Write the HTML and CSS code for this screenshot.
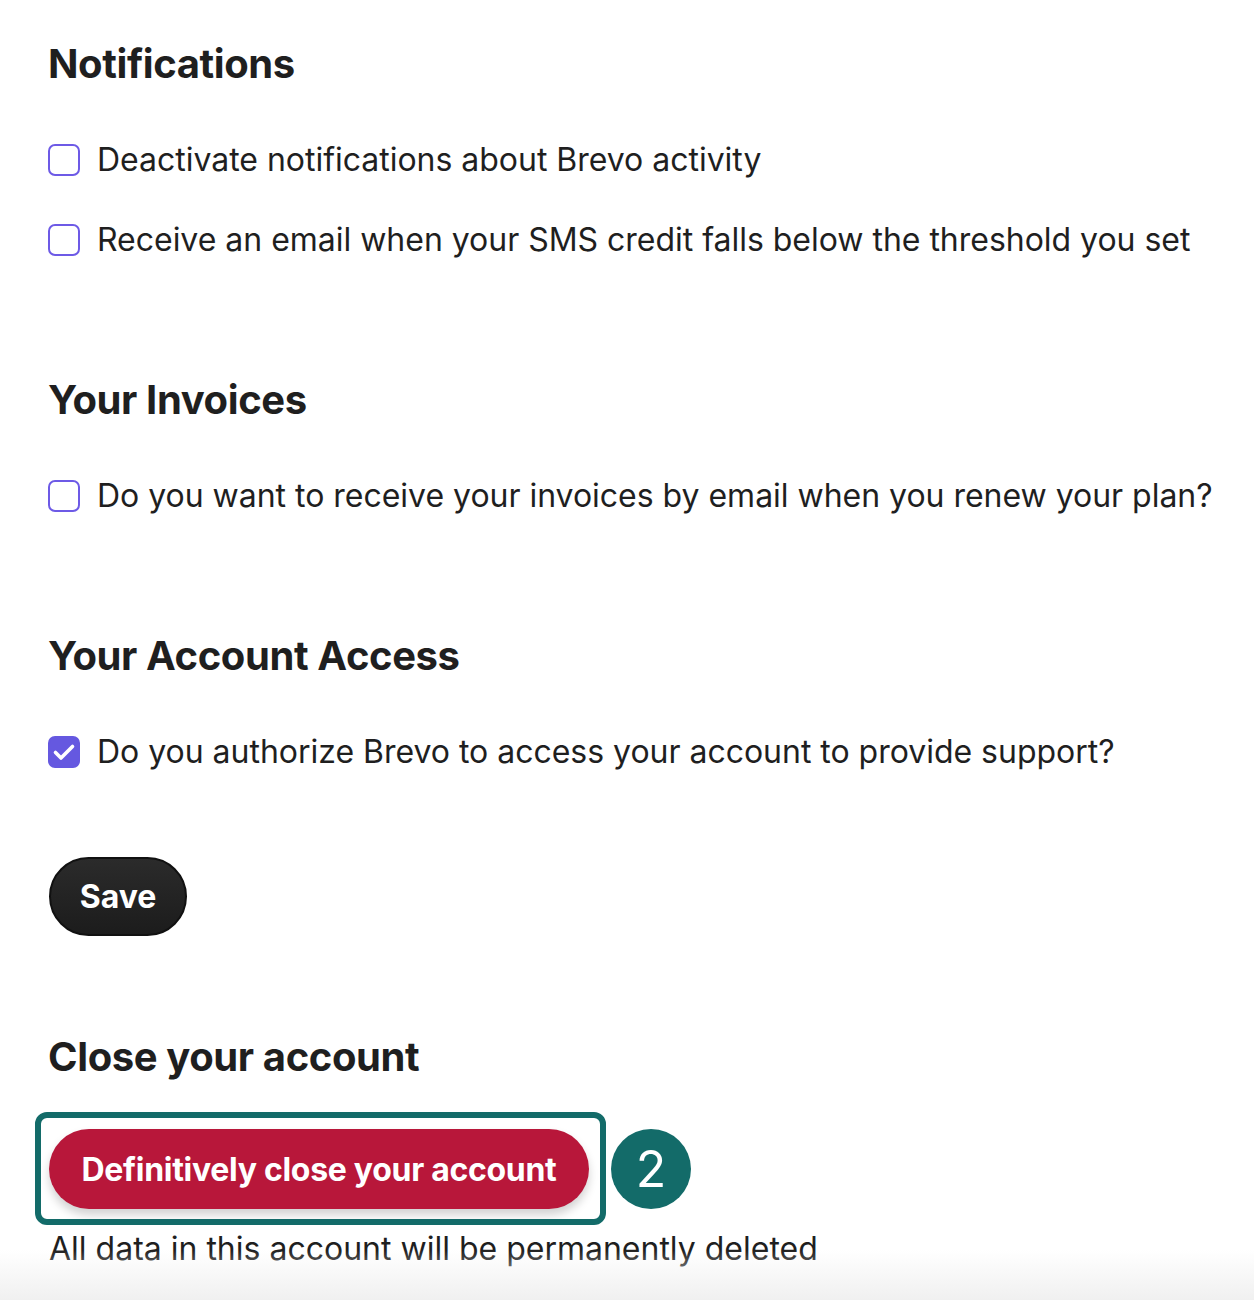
FILE: index.html
```html
<!DOCTYPE html>
<html lang="en">
<head>
<meta charset="utf-8">
<title>Account settings</title>
<link rel="stylesheet" href="styles.css">
</head>
<body>
<main class="page">
  <section class="section">
    <h2 class="section-title">Notifications</h2>
    <label class="check-row">
      <span class="box"></span>
      <span class="check-label">Deactivate notifications about Brevo activity</span>
    </label>
    <label class="check-row">
      <span class="box"></span>
      <span class="check-label">Receive an email when your SMS credit falls below the threshold you set</span>
    </label>
  </section>

  <section class="section">
    <h2 class="section-title">Your Invoices</h2>
    <label class="check-row">
      <span class="box"></span>
      <span class="check-label">Do you want to receive your invoices by email when you renew your plan?</span>
    </label>
  </section>

  <section class="section">
    <h2 class="section-title">Your Account Access</h2>
    <label class="check-row">
      <span class="box box-checked">
        <svg viewBox="0 0 32 32" aria-hidden="true"><path d="M7.5 16.5l5.5 5.5L24.5 10.5" fill="none" stroke="#fff" stroke-width="3.6" stroke-linecap="round" stroke-linejoin="round"/></svg>
      </span>
      <span class="check-label">Do you authorize Brevo to access your account to provide support?</span>
    </label>
  </section>

  <button class="btn-save" type="button">Save</button>

  <section class="close-section">
    <h2 class="section-title">Close your account</h2>
    <div class="close-row">
      <div class="highlight">
        <button class="btn-danger" type="button"><span class="btn-danger-text">Definitively close your account</span></button>
      </div>
      <span class="step-badge">2</span>
    </div>
    <p class="close-note">All data in this account will be permanently deleted</p>
  </section>
</main>
<div class="fade"></div>
</body>
</html>
```

FILE: styles.css
```css
html, body {
  margin: 0;
  padding: 0;
  background: #ffffff;
}

body {
  font-family: "Inter", "Noto Sans", sans-serif;
  color: #1f1f1f;
  height: 1300px;
  overflow: hidden;
  position: relative;
}

.page {
  padding: 40px 48px 0 48px;
}

.section {
  display: flex;
  flex-direction: column;
  gap: 32px;
  margin-bottom: 112px;
}

.section:nth-of-type(3) {
  margin-bottom: 81px;
}

.section-title {
  margin: 0 0 16px;
  font-size: 40px;
  line-height: 48px;
  font-weight: 700;
  letter-spacing: -0.4px;
}

.check-row {
  display: flex;
  align-items: center;
  gap: 17px;
  height: 48px;
  font-size: 32px;
  line-height: 48px;
  letter-spacing: -0.02px;
}

.box {
  flex: none;
  box-sizing: border-box;
  width: 32px;
  height: 32px;
  border: 2px solid #6d5ae6;
  border-radius: 7px;
  background: #fff;
  display: flex;
  align-items: center;
  justify-content: center;
}

.box-checked {
  background: #6558e0;
  border-color: #6558e0;
}

.box-checked svg {
  width: 32px;
  height: 32px;
  flex: none;
}

.check-label {
  white-space: nowrap;
}

.btn-save {
  display: block;
  box-sizing: border-box;
  height: 79px;
  width: 138px;
  padding: 0;
  border: 2px solid #111;
  border-radius: 40px;
  background: linear-gradient(#2b2b2b, #1c1c1c);
  color: #fff;
  font-family: inherit;
  font-size: 32px;
  font-weight: 700;
  margin: 0 0 97px 1px;
}

.close-section .section-title {
  margin-bottom: 48px;
}

.close-row {
  display: flex;
  align-items: center;
  gap: 22px;
  margin-left: 1px;
}

.highlight {
  position: relative;
}

.highlight::before {
  content: "";
  position: absolute;
  left: -14px;
  top: -17px;
  right: -17px;
  bottom: -16px;
  border: 6px solid #136b69;
  border-radius: 12px;
  pointer-events: none;
}

.btn-danger {
  display: block;
  box-sizing: border-box;
  height: 80px;
  width: 540px;
  padding: 0;
  border: none;
  border-radius: 40px;
  background: #b8173a;
  color: #fff;
  font-family: inherit;
  font-size: 32px;
  font-weight: 700;
  box-shadow: 0 6px 10px rgba(0, 0, 0, 0.18);
}

.btn-danger-text {
  display: inline-block;
  letter-spacing: -0.3px;
}

.step-badge {
  flex: none;
  width: 80px;
  height: 80px;
  border-radius: 50%;
  background: #136b69;
  color: #fff;
  font-size: 50px;
  line-height: 80px;
  text-align: center;
  font-weight: 400;
}

.close-note {
  margin: 16px 0 0 1px;
  font-size: 32px;
  line-height: 48px;
}

.fade {
  position: absolute;
  left: 0;
  right: 0;
  bottom: 0;
  height: 50px;
  background: linear-gradient(rgba(240, 240, 240, 0), #f0f0f0);
  pointer-events: none;
}
```
